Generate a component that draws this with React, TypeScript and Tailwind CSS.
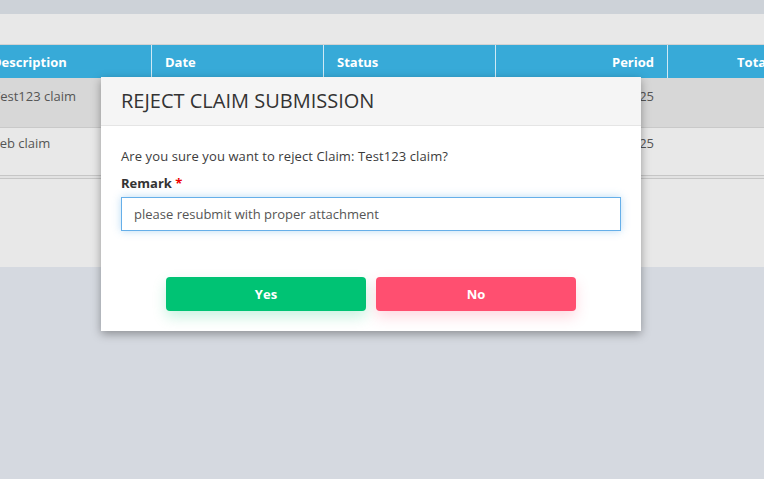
import React from "react";

const cols = [
  { label: "Description", align: "left" },
  { label: "Date", align: "left" },
  { label: "Status", align: "left" },
  { label: "Period", align: "right" },
  { label: "Total Amount", align: "right" },
];

const rows = [
  ["Test123 claim", "", "", "Jan 2025", ""],
  ["Feb claim", "", "", "Feb 2025", ""],
];

export default function App() {
  return (
    <div
      className="relative w-[764px] h-[479px] overflow-hidden bg-[#d5d9e0]"
      style={{ fontFamily: '"Open Sans", "Liberation Sans", sans-serif' }}
    >
      <div className="h-[14px] bg-[#cdd2d8]" />
      <div className="h-[253px] bg-[#e8e8e8] pt-[30px] overflow-hidden">
        <div className="ml-[-21px] w-[880px]">
          <div className="flex h-[34px] bg-[#37aad8] border-t border-[#d2d2d2] text-white text-[13px] font-bold">
            {cols.map((c, i) => (
              <div
                key={c.label}
                className={`w-[172px] shrink-0 flex items-center pt-[2px] px-[13px] ${
                  i > 0 ? "border-l border-[#cfe9f5]" : ""
                } ${c.align === "right" ? "justify-end" : ""}`}
              >
                {c.label}
              </div>
            ))}
          </div>
          {rows.map((r, ri) => (
            <div
              key={ri}
              className={`flex text-[13px] text-[#555] ${
                ri === 0 ? "h-[50px] bg-[#d7d7d7] border-b border-[#c9c9c9]" : "h-[47px] bg-[#e8e8e8]"
              }`}
            >
              {r.map((cell, ci) => (
                <div
                  key={ci}
                  className={`w-[172px] shrink-0 px-[13px] ${ri === 0 ? "pt-[9px]" : "pt-[6px]"} ${
                    ci === 0 ? "pl-[14px]" : ""
                  } ${cols[ci].align === "right" ? "text-right" : ""}`}
                >
                  {cell}
                </div>
              ))}
            </div>
          ))}
          <div className="h-[4px] border-t border-b border-[#c6c6c6] bg-[#e2e2e2]" />
        </div>
      </div>

      <div className="absolute left-[101px] top-[77px] w-[540px] h-[254px] bg-white shadow-[0_3px_9px_rgba(0,0,0,0.35)]">
        <div className="h-[49px] bg-[#f5f5f5] border-b border-[#e5e5e5] px-[20px] flex items-center">
          <h3 className="text-[20px] text-[#333] leading-none">REJECT CLAIM SUBMISSION</h3>
        </div>
        <div className="px-[20px] pt-[21px]">
          <p className="text-[13px] text-[#3c3c3c] leading-[18px] tracking-[0.1px]">
            Are you sure you want to reject Claim: Test123 claim?
          </p>
          <label className="block mt-[9px] text-[13px] font-bold text-[#333] leading-[18px]">
            Remark <span className="text-[#e00]">*</span>
          </label>
          <div className="mt-[5px] h-[34px] w-[500px] border border-[#66afe9] shadow-[0_0_8px_rgba(102,175,233,0.45)] flex items-center pt-[1px] px-[12px] text-[13px] text-[#555]">
            please resubmit with proper attachment
          </div>
          <div className="flex justify-center gap-[10px] mt-[46px]">
            <button className="w-[200px] h-[34px] pt-[1px] rounded-[4px] bg-[#00c374] text-white text-[13px] font-bold shadow-[0_6px_14px_rgba(0,195,116,0.22)]">
              Yes
            </button>
            <button className="w-[200px] h-[34px] pt-[1px] rounded-[4px] bg-[#ff4f70] text-white text-[13px] font-bold shadow-[0_6px_14px_rgba(255,79,112,0.22)]">
              No
            </button>
          </div>
        </div>
      </div>
    </div>
  );
}
